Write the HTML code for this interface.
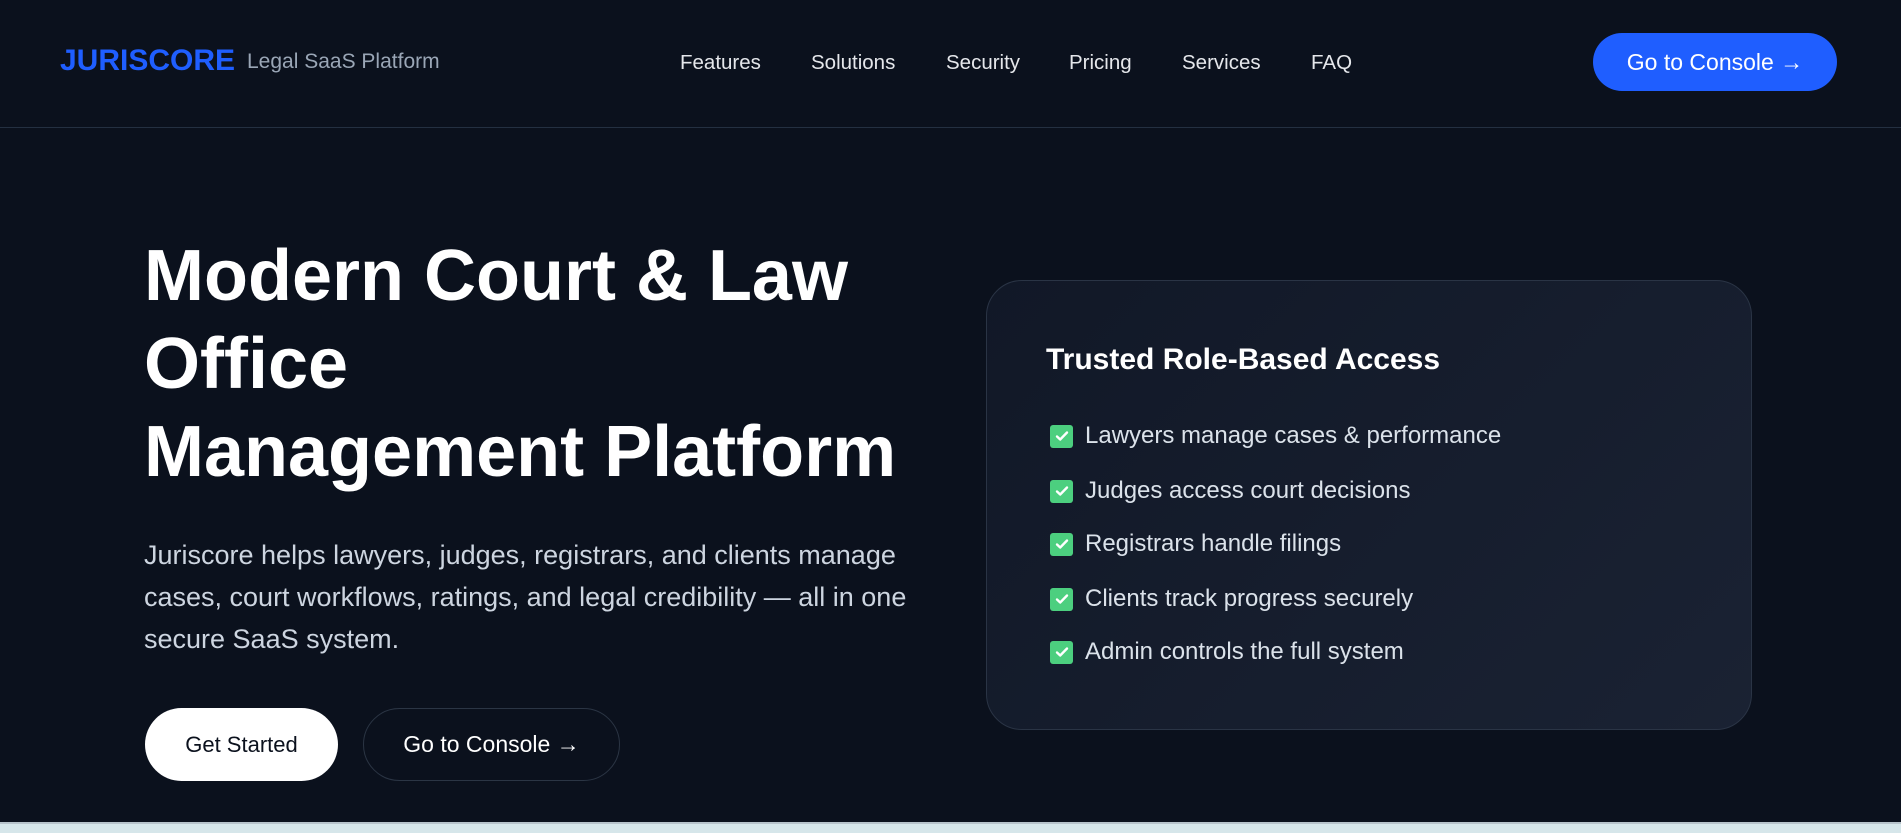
<!DOCTYPE html>
<html><head><meta charset="utf-8"><style>
*{margin:0;padding:0;box-sizing:border-box}
body{width:1901px;height:833px;overflow:hidden;background:#0b111d;font-family:"Liberation Sans",sans-serif;position:relative;color:#fff}
.a{position:absolute;white-space:nowrap}
nav{position:absolute;left:0;top:0;width:1901px;height:128px;border-bottom:1px solid #243041}
.logo{left:60px;top:44px;font-size:30px;font-weight:bold;color:#1f5eff}
.sub{left:247px;top:50px;font-size:21px;color:#9aa6b6}
.nl{top:51px;font-size:20.5px;color:#e5e7eb}
.btn{left:1593px;top:33px;width:244px;height:58px;border-radius:29px;background:#1f5eff;font-size:23px;display:flex;align-items:center;justify-content:center}
h1{position:absolute;left:144px;top:232px;font-size:72px;line-height:88px;font-weight:bold}
.p{position:absolute;left:144px;top:534px;font-size:27px;line-height:42px;color:#cdd5e0;width:800px}
.b1{left:145px;top:708px;width:193px;height:73px;border-radius:37px;background:#fff;color:#0b111d;font-size:22px;display:flex;align-items:center;justify-content:center}
.b2{left:363px;top:708px;width:257px;height:73px;border-radius:37px;border:1px solid #2b3544;font-size:23px;display:flex;align-items:center;justify-content:center}
.card{left:986px;top:280px;width:766px;height:450px;border-radius:36px;border:1px solid #2a3445;background:linear-gradient(135deg,#111827 0%,#1a2233 100%)}
.ch{left:1046px;top:343px;font-size:30px;font-weight:bold}
.li{left:1050px;font-size:24px;color:#dbe2ea;display:flex;align-items:center}
.cb{width:23px;height:23px;border-radius:3px;background:#4ccf7f;margin-right:12px;display:flex;align-items:center;justify-content:center}
.strip{left:0;top:822px;width:1901px;height:11px;background:#d6e6ea;border-top:2px solid #b7c3cb}
</style></head><body>
<nav></nav>
<div class="a logo">JURISCORE</div>
<div class="a sub">Legal SaaS Platform</div>
<div class="a nl" style="left:680px">Features</div>
<div class="a nl" style="left:811px">Solutions</div>
<div class="a nl" style="left:946px">Security</div>
<div class="a nl" style="left:1069px">Pricing</div>
<div class="a nl" style="left:1182px">Services</div>
<div class="a nl" style="left:1311px">FAQ</div>
<div class="a btn">Go to Console →</div>
<h1>Modern Court &amp; Law<br>Office<br>Management Platform</h1>
<div class="p">Juriscore helps lawyers, judges, registrars, and clients manage cases, court workflows, ratings, and legal credibility — all in one secure SaaS system.</div>
<div class="a b1">Get Started</div>
<div class="a b2">Go to Console →</div>
<div class="a card"></div>
<div class="a ch">Trusted Role-Based Access</div>
<div class="a li" style="top:422px"><span class="cb"><svg width="16" height="16" viewBox="0 0 16 16"><path d="M3 8.5l3.2 3L13 4.5" stroke="#fff" stroke-width="2.4" fill="none" stroke-linecap="round" stroke-linejoin="round"/></svg></span>Lawyers manage cases &amp; performance</div>
<div class="a li" style="top:477px"><span class="cb"><svg width="16" height="16" viewBox="0 0 16 16"><path d="M3 8.5l3.2 3L13 4.5" stroke="#fff" stroke-width="2.4" fill="none" stroke-linecap="round" stroke-linejoin="round"/></svg></span>Judges access court decisions</div>
<div class="a li" style="top:530px"><span class="cb"><svg width="16" height="16" viewBox="0 0 16 16"><path d="M3 8.5l3.2 3L13 4.5" stroke="#fff" stroke-width="2.4" fill="none" stroke-linecap="round" stroke-linejoin="round"/></svg></span>Registrars handle filings</div>
<div class="a li" style="top:585px"><span class="cb"><svg width="16" height="16" viewBox="0 0 16 16"><path d="M3 8.5l3.2 3L13 4.5" stroke="#fff" stroke-width="2.4" fill="none" stroke-linecap="round" stroke-linejoin="round"/></svg></span>Clients track progress securely</div>
<div class="a li" style="top:638px"><span class="cb"><svg width="16" height="16" viewBox="0 0 16 16"><path d="M3 8.5l3.2 3L13 4.5" stroke="#fff" stroke-width="2.4" fill="none" stroke-linecap="round" stroke-linejoin="round"/></svg></span>Admin controls the full system</div>
<div class="a strip"></div>
</body></html>
